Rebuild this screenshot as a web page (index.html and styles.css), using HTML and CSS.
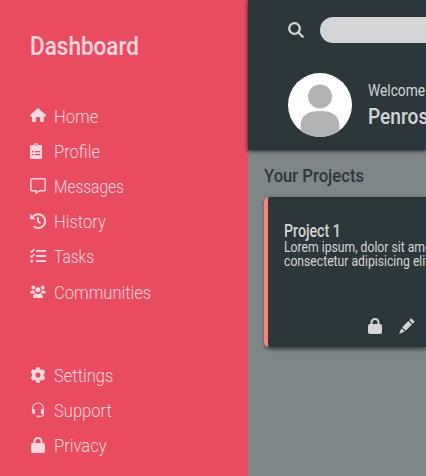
FILE: index.html
```html
<!DOCTYPE html>
<html lang="en">
<head>
<meta charset="utf-8">
<title>Dashboard</title>
<link rel="stylesheet" href="styles.css">
</head>
<body>
<div class="app">
  <aside class="sidebar">
    <h1><span class="t">Dashboard</span></h1>
    <nav class="menu">
      <a><svg viewBox="0 0 16 16"><path d="M8 0 0 7v1.500h2V13q0 1 1 1h3v-4q0-1 1-1h2q1 0 1 1v4h3q1 0 1-1V8.500h2V7z"/></svg><span class="t">Home</span></a>
      <a><svg viewBox="0 0 16 16"><path fill-rule="evenodd" d="M1.500 2H4a2 2 0 0 1 4 0h2.500Q12 2 12 3.500v11Q12 16 10.500 16h-9Q0 16 0 14.500v-11Q0 2 1.500 2zM6 1.300a.8.8 0 1 0 0 1.600.8.8 0 0 0 0-1.600zM2 8v1.200h1.500V8zm3 0v1.200h5V8zM2 11v1.200h1.500V11zm3 0v1.200h5V11z"/></svg><span class="t">Profile</span></a>
      <a><svg viewBox="0 0 16 16"><path class="line" d="M2 .8h12q1.200 0 1.200 1.200v9.500q0 1.200-1.200 1.200H9.500L6 15.300v-2.600H2Q.8 12.700.8 11.500V2Q.8.800 2 .8z"/></svg><span class="t narrow">Messages</span></a>
      <a><svg viewBox="0 0 16 16"><path class="line thick" d="M3 3.600A6.900 6.900 0 1 1 3.600 13.200M8 4v4.500l2.500 1.800"/><path d="M0 .8v5.400h5.500z"/></svg><span class="t">History</span></a>
      <a><svg viewBox="0 0 16 16"><path d="M6 2h10v2H6zM6 7h10v2H6zM6 12h10v2H6z"/><circle cx="1.600" cy="13" r="1.500"/><path class="line" d="m.4 2.800 1.300 1.300L4.500 1M.4 7.800l1.300 1.300L4.500 6"/></svg><span class="t narrow">Tasks</span></a>
      <a><svg viewBox="0 0 16 16"><circle cx="3.300" cy="3.500" r="1.900"/><circle cx="12.700" cy="3.500" r="1.900"/><circle cx="8" cy="5.800" r="2.500"/><path d="M0 9.500Q0 6.500 2.500 6.500h2Q4.500 8.300 5.500 9.500zM16 9.500q0-3-2.500-3h-2q0 1.800-1 3zM3 14q0-4.500 3-4.500 2 1 4 0 3 0 3 4.500z"/></svg><span class="t">Communities</span></a>
    </nav>
    <nav class="menu lower">
      <a><svg viewBox="0 0 16 16"><path fill-rule="evenodd" d="M6.300.2h3.400l.5 2 1.400.8 2-.6 1.700 3L13.900 7v2l1.400 1.500-1.700 3-2-.6-1.400.8-.5 2.100H6.300l-.5-2.100-1.400-.8-2 .6-1.700-3L2.100 9V7L.7 5.400l1.700-3 2 .6 1.400-.8zM8 5.500a2.500 2.500 0 1 0 0 5 2.500 2.500 0 0 0 0-5z"/></svg><span class="t">Settings</span></a>
      <a><svg viewBox="0 0 16 16"><path class="line thin" d="M2.500 9V6.500a5.500 5.500 0 0 1 11 0v5q0 3-3.500 3H8"/><path d="M2 7h3v5H4q-2 0-2-2zM11 7h3v3q0 2-2 2h-1z"/><rect x="6.500" y="13.400" width="3.500" height="2.200" rx="1"/></svg><span class="t">Support</span></a>
      <a><svg viewBox="0 0 16 16"><path fill-rule="evenodd" d="M3.500 6V4.500a4.500 4.500 0 0 1 9 0V6h.5q2 0 2 2v6q0 2-2 2H3q-2 0-2-2V8q0-2 2-2zm2 0h5V4.500a2.500 2.500 0 0 0-5 0z"/></svg><span class="t">Privacy</span></a>
    </nav>
  </aside>
  <div class="page">
    <header>
      <div class="search">
        <svg viewBox="0 0 16 16"><circle class="line bold" cx="6.500" cy="6.500" r="5.300"/><path class="line bold" stroke-linecap="round" d="m10.700 10.700 4 4"/></svg>
        <div class="field"></div>
      </div>
      <div class="user">
        <svg class="avatar" viewBox="0 0 64 64"><defs><clipPath id="disc"><circle cx="32" cy="32" r="32"/></clipPath></defs><g clip-path="url(#disc)"><path fill="#fff" d="M0 0h64v64H0z"/><circle cx="32" cy="23.500" r="12" fill="#b3b3b3"/><path fill="#b3b3b3" d="M12.500 64V53C12.500 42 20 38 32 38s19.500 4 19.500 15v11z"/></g></svg>
        <div class="greeting"><p><span class="t">Welcome</span></p><h2><span class="t">Penrose</span></h2></div>
      </div>
    </header>
    <main>
      <h3><span class="t">Your Projects</span></h3>
      <article class="card">
        <h4><span class="t">Project 1</span></h4>
        <p><span class="t">Lorem ipsum, dolor sit amet<br>consectetur adipisicing elit.</span></p>
        <div class="actions">
          <svg viewBox="0 0 16 16"><path fill-rule="evenodd" d="M3.500 6V4.500a4.500 4.500 0 0 1 9 0V6h.5q2 0 2 2v6q0 2-2 2H3q-2 0-2-2V8q0-2 2-2zm2 0h5V4.500a2.500 2.500 0 0 0-5 0z"/></svg>
          <svg viewBox="0 0 16 16"><path d="m12.200.3 3.500 3.500-2 2-3.500-3.500zM9.400 3.100l3.500 3.500-6.200 6.200-3.500-3.500zM2.400 10.200l3.400 3.400L0 16z"/></svg>
        </div>
      </article>
    </main>
  </div>
</div>
</body>
</html>
```
FILE: styles.css
```css
* { box-sizing: border-box; }
body, h1, h2, h3, h4, p { margin: 0; }
body { font-family: Roboto, "Open Sans", sans-serif; }
h1, h2, h3, h4 { font-weight: 500; }
.app { display: flex; width: 100%; height: 476px; overflow: hidden; }
.t { display: inline-block; transform: scaleX(.88); transform-origin: 0 50%; white-space: nowrap; }
svg { display: block; width: 16px; height: 16px; flex: none; fill: currentColor; }
.line { fill: none; stroke: currentColor; stroke-width: 1.5; }
.thick { stroke-width: 2; }
.thin { stroke-width: 1.1; }
.bold { stroke-width: 2.3; }

.sidebar { width: 248px; flex: none; padding: 30px 30px 0; background: #e94c60; color: #fcd6dc; }
.sidebar h1 { height: 32px; font-size: 26px; line-height: 32px; }
.sidebar h1 .t { transform: scaleX(.865); }
.menu { display: grid; grid-auto-rows: 35.2px; margin-top: 36px; }
.menu.lower { margin-top: 48px; }
.menu a { display: flex; align-items: center; gap: 8px; font-size: 19px; font-weight: 300; }
.menu .t { position: relative; top: .6px; transform: scaleX(.87); }
.menu .narrow { transform: scaleX(.815); }

.page { flex: 1; min-width: 0; background: #7e8688; }
header { position: relative; height: 150px; padding: 17px 0 0 40px; background: #2c373c; color: #d3d5d7; box-shadow: 0 1px 4px #1c2226; }
.search { display: flex; align-items: center; gap: 16px; }
.field { flex: 1; height: 26px; border-radius: 13px 0 0 13px; background: #d3d5d7; }
.user { display: flex; gap: 16px; margin-top: 30px; }
.avatar { width: 64px; height: 64px; }
.greeting { padding-top: 8px; }
.greeting p { font-size: 16px; line-height: 20px; }
.greeting p .t { transform: scaleX(.86); }
.greeting h2 { font-size: 22px; line-height: 31px; }
.greeting h2 .t { transform: scaleX(.87); }
main { padding: 15px 0 0 16px; }
h3 { color: #2c373c; font-size: 18.5px; line-height: 23px; }
h3 .t { transform: scaleX(.9); }
.card { display: flex; flex-direction: column; height: 150px; margin-top: 9px; padding: 25px 0 13px 16px; border-left: 4px solid #ff8177; border-radius: 5px 0 0 5px; background: #2c373c; color: #d3d5d7; box-shadow: 1px 2px 4px #30393e; }
h4 { font-size: 17.500px; line-height: 18px; }
h4 .t { transform: scaleX(.81); }
.card p { font-size: 14px; line-height: 14px; }
.card p .t { transform: scaleX(.87); }
.actions { display: flex; gap: 16px; margin-top: auto; padding-left: 83px; }
```
